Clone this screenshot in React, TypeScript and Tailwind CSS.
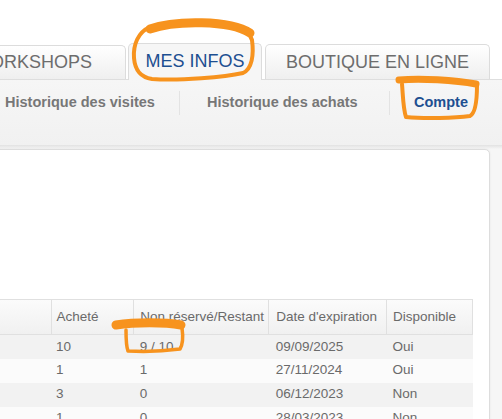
import React from "react";

const rows = [
  { a: "10", r: "9 / 10", d: "09/09/2025", o: "Oui" },
  { a: "1", r: "1", d: "27/11/2024", o: "Oui" },
  { a: "3", r: "0", d: "06/12/2023", o: "Non" },
  { a: "1", r: "0", d: "28/03/2023", o: "Non" },
];

export default function App() {
  return (
    <div className="relative w-[502px] h-[419px] overflow-hidden bg-white font-['Liberation_Sans',Arial,sans-serif]">
      <div className="h-[43px] bg-white" />
      {/* Tabs */}
      <div className="flex items-end h-[36px] ml-[-60px] relative z-10">
        <div className="w-[186px] h-[34px] mr-[2px] flex items-center justify-end pr-[33px] rounded-t-[5px] border border-b-0 border-[#dcdcdc] bg-gradient-to-b from-white to-[#efefef] text-[18px] text-[#6d6d6d]">
          WORKSHOPS
        </div>
        <div className="w-[134px] h-[37px] mr-[3px] -mb-[1px] flex items-center justify-center rounded-t-[5px] border border-b-0 border-[#dcdcdc] bg-[#f6f6f6] text-[18px] text-[#1d4f91] pb-[2px]">
          MES INFOS
        </div>
        <div className="w-[225px] h-[35px] flex items-center justify-center rounded-t-[5px] border border-b-0 border-[#dcdcdc] bg-gradient-to-b from-white to-[#efefef] text-[18px] text-[#6d6d6d]">
          BOUTIQUE EN LIGNE
        </div>
      </div>
      {/* Sub nav */}
      <div className="h-[66px] bg-gradient-to-b from-[#f6f6f6] to-[#f1f1f1] border-t border-[#dedede] flex items-start pt-[11px] text-[14.5px] font-bold text-[#777]">
        <div className="w-[180px] h-[24px] pl-[5px] flex items-center border-r border-[#e3e3e3] whitespace-nowrap">Historique des visites</div>
        <div className="w-[210px] h-[24px] pl-[27px] flex items-center border-r border-[#e3e3e3] whitespace-nowrap">Historique des achats</div>
        <div className="pl-[24px] h-[24px] flex items-center text-[#1d4f91]">Compte</div>
      </div>
      {/* content area */}
      <div className="h-[4px] bg-gradient-to-b from-[#e2e2e2] to-[#f6f6f6]" />
      <div className="bg-[#f6f6f6] flex h-[310px]">
        <div className="ml-[-10px] w-[500px] bg-white border border-[#dddddd] rounded-tr-[5px] shadow-[0_0_2px_rgba(0,0,0,0.08)] pt-[149px]">
          <table className="w-[482px] border-collapse text-[13.5px] text-[#6a6a6a]">
            <thead>
              <tr className="h-[35px] bg-gradient-to-b from-[#fbfbfb] to-[#f0f0f0]">
                <th className="w-[60px] border border-[#e0e0e0] font-normal text-left"></th>
                <th className="w-[83px] border border-[#e0e0e0] font-normal text-left pl-[5px]">Acheté</th>
                <th className="w-[135px] border border-[#e0e0e0] font-normal text-left pl-[6px] whitespace-nowrap">Non réservé/Restant</th>
                <th className="w-[118px] border border-[#e0e0e0] font-normal text-left pl-[7px] whitespace-nowrap">Date d'expiration</th>
                <th className="w-[86px] border border-[#e0e0e0] font-normal text-left pl-[6px]">Disponible</th>
              </tr>
            </thead>
            <tbody>
              {rows.map((r, i) => (
                <tr key={i} className={`h-[24px] ${i % 2 === 0 ? "bg-[#f2f2f2]" : "bg-[#fbfbfb]"}`}>
                  <td></td>
                  <td className="pl-[5px]">{r.a}</td>
                  <td className="pl-[6px]">{r.r}</td>
                  <td className="pl-[7px]">{r.d}</td>
                  <td className="pl-[6px]">{r.o}</td>
                </tr>
              ))}
            </tbody>
          </table>
        </div>
      </div>
      {/* annotations */}
      <svg className="absolute left-0 top-0 pointer-events-none z-20" width="502" height="419" viewBox="0 0 502 419" fill="none" strokeLinecap="round" strokeLinejoin="round">
        <g stroke="#f7931e">
          <path d="M150 29 C 175 20 230 20 250 33" strokeWidth="9" />
          <path d="M150 27 C 138 32 133 45 134 58 C 135 70 140 77 152 79 C 180 81 225 77 243 73 C 252 69 254 55 252 40 C 250 34 245 30 238 29" strokeWidth="4" />
          <path d="M399 80 C 420 78 455 80 476 84" strokeWidth="7" />
          <path d="M402 84 C 403 95 403 108 406 117 C 425 119 455 118 470 116 C 476 113 477 98 477 85" strokeWidth="4" />
          <path d="M116 325 C 135 322 165 322 181 325" strokeWidth="9" />
          <path d="M126 330 C 126 338 126 346 128 351 C 145 352 165 351 180 349 C 183 344 183 335 182 328" strokeWidth="3.5" />
        </g>
      </svg>
    </div>
  );
}
